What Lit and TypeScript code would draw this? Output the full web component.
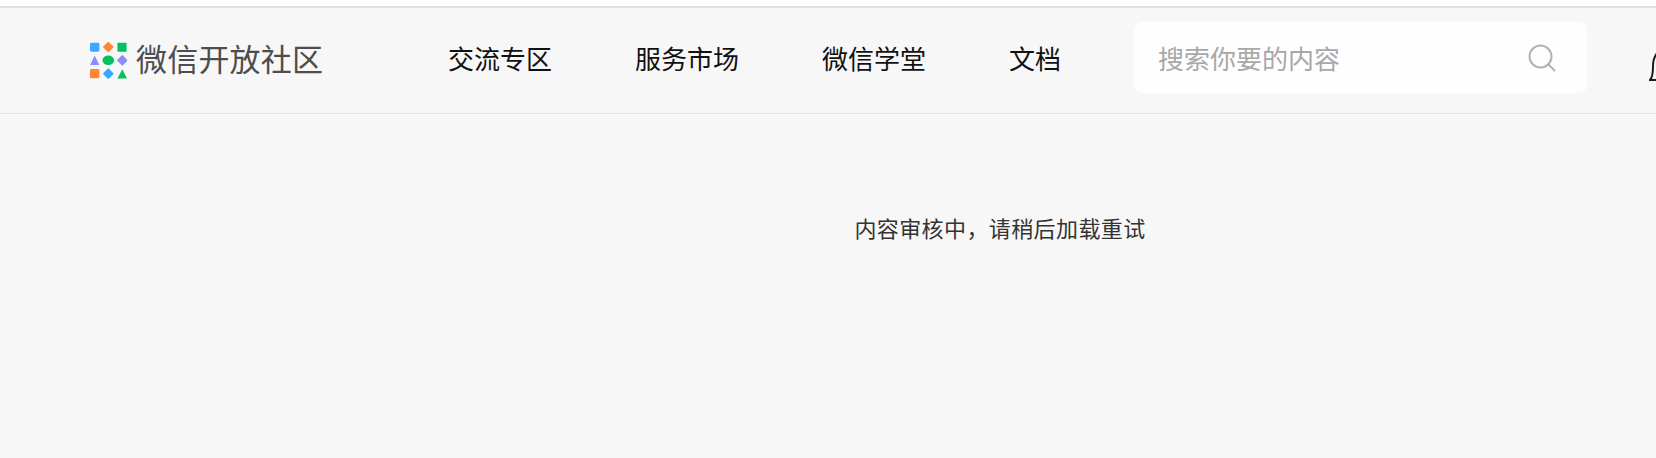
import { LitElement, html, css, svg } from 'lit';
import { customElement } from 'lit/decorators.js';

// 3x3 logo of small coloured shapes
const logo = svg`
  <rect x="0" y="0.4" width="9.6" height="9.2" rx="1.5" fill="#38a9ff"/>
  <rect x="14.7" y="0.7" width="8" height="8" rx="1" fill="#ff8733" transform="rotate(45 18.7 4.7)"/>
  <rect x="28" y="0.4" width="9.4" height="9.2" rx="0.8" fill="#07c160"/>
  <path d="M4.8 13.5L9.6 23H0Z" fill="#8c8cff"/>
  <ellipse cx="18.7" cy="18.3" rx="6" ry="4.8" fill="#07c160"/>
  <rect x="29" y="14.3" width="8" height="8" rx="1" fill="#8c8cff" transform="rotate(45 33 18.3)"/>
  <rect x="0" y="27.3" width="9.6" height="9.4" rx="1" fill="#ff8733"/>
  <rect x="14.7" y="28" width="8" height="8" rx="1" fill="#38a9ff" transform="rotate(45 18.7 32)"/>
  <path d="M33 27.5L37.8 36.8H28Z" fill="#07c160"/>
`;

@customElement('app-root')
export class AppRoot extends LitElement {
  static styles = css`
    :host {
      display: block;
      height: 458px;
      overflow: hidden;
      background: #f7f7f7;
      font-family: "Noto Sans CJK SC", "Liberation Sans", sans-serif;
    }

    .top-strip {
      height: 6px;
      background: #fff;
      border-bottom: 2px solid #e0e0e0;
    }

    .header {
      display: flex;
      align-items: center;
      box-sizing: border-box;
      height: 106px;
      padding: 0 0 6px 90px;
      border-bottom: 1px solid #e6e6e6;
      white-space: nowrap;
    }

    .brand {
      display: flex;
      align-items: center;
      gap: 9px;
      width: 358px;
      flex: none;
      font-size: 31px;
      letter-spacing: 0.2px;
      color: #4d4d4d;
    }

    .brand svg {
      flex: none;
      margin-top: 6px;
    }

    .nav {
      display: flex;
      gap: 83px;
      font-size: 26px;
      color: #111;
      flex: none;
    }

    .search {
      display: flex;
      align-items: center;
      justify-content: space-between;
      box-sizing: border-box;
      flex: none;
      width: 453px;
      height: 71px;
      margin-left: 73px;
      padding: 0 31px 0 24px;
      background: #fefefe;
      border-radius: 8px;
      font-size: 26px;
      color: #a8a8a8;
    }

    .bell {
      flex: none;
      margin: 14px 0 0 62px;
    }

    .notice {
      padding: 97px 0 0 344px;
      text-align: center;
      font-size: 22px;
      letter-spacing: 0.4px;
      line-height: 32px;
      color: #333;
    }
  `;

  render() {
    return html`
      <div class="top-strip"></div>
      <header class="header">
        <div class="brand">
          <svg width="37" height="37" viewBox="0 0 37.8 37">${logo}</svg>
          <span>微信开放社区</span>
        </div>
        <nav class="nav">
          <span>交流专区</span>
          <span>服务市场</span>
          <span>微信学堂</span>
          <span>文档</span>
        </nav>
        <div class="search">
          <span>搜索你要的内容</span>
          <svg width="28" height="28" viewBox="0 0 28 28" fill="none" stroke="#b2b2b2" stroke-width="2">
            <circle cx="12.5" cy="12.5" r="11"/>
            <path d="M20.5 20.5L27 27"/>
          </svg>
        </div>
        <svg class="bell" width="30" height="32" viewBox="0 0 30 32" fill="none" stroke="#1a1a1a" stroke-width="2">
          <path d="M1 31C3 29 4 24 4 17C4 7 9 1 15 1C21 1 26 7 26 17C26 24 27 29 29 31Z"/>
        </svg>
      </header>
      <div class="notice">内容审核中，请稍后加载重试</div>
    `;
  }
}
